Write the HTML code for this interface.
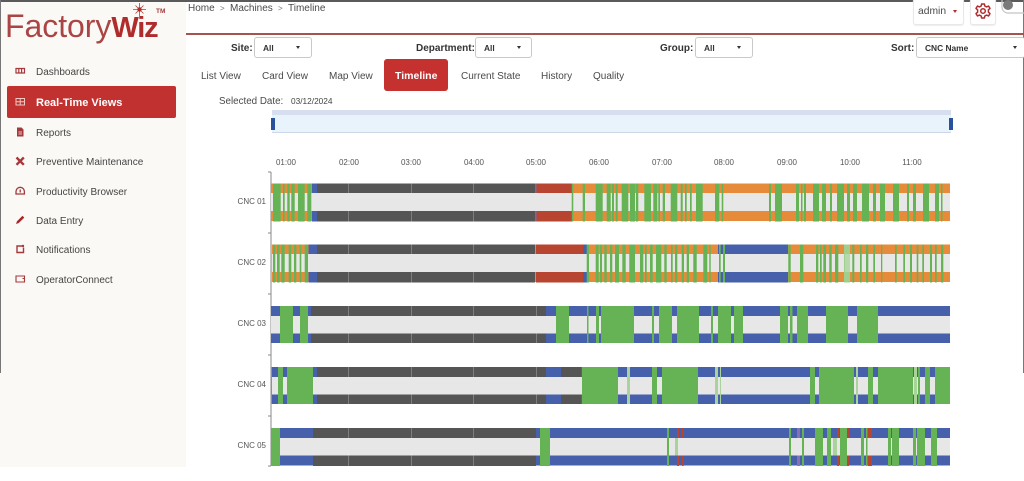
<!DOCTYPE html>
<html lang="en">
<head>
<meta charset="utf-8">
<title>FactoryWiz Timeline</title>
<style>
html,body{margin:0;padding:0;background:#fff}
body{width:1024px;height:481px;position:relative;overflow:hidden;font-family:"Liberation Sans",sans-serif;color:#444}
#wrap{position:absolute;left:0;top:0;width:1024px;height:481px;overflow:hidden;filter:blur(.3px)}
.a{position:absolute;white-space:nowrap}
#top{left:0;top:0;width:1024px;height:2px;background:#5a5a5a}
#lb{left:0;top:0;width:1px;height:373px;background:#777}
#rb{right:0;top:0;width:1px;height:373px;background:#777}
#side{left:0;top:0;width:186px;height:467px;background:#faf9f5}
#hline{left:186px;top:33px;width:838px;height:2px;background:#a5534c}
.logo{font-size:32px;line-height:36px;color:#ab4545;left:5px;top:8px;letter-spacing:-.05px}
.logo b{color:#b02c2c;font-size:29px;letter-spacing:-1.2px}
.tm{left:156px;top:8px;font-size:6.5px;font-weight:bold;color:#a5383a}
.nav{left:36px;font-size:10px;line-height:12px;color:#454545}
.active{left:7px;top:86px;width:169px;height:32px;background:#c1312f;border-radius:2px}
.ic{position:absolute;left:14px;width:12px;height:12px}
.t{font-size:10px;line-height:12px;color:#4a4a4a}
.lbl{font-size:10px;line-height:12px;font-weight:bold;color:#333}
.sel{height:19px;background:#fff;border:1px solid #c9c9c9;border-radius:3px;box-sizing:content-box}
.sel span{position:absolute;left:8px;top:5px;font-size:8.4px;line-height:10px;font-weight:bold;color:#333}
.sel i{position:absolute;top:8px;width:0;height:0;border-left:2.5px solid transparent;border-right:2.5px solid transparent;border-top:3px solid #333}
.hr{font-size:8px;line-height:10px;top:158px;color:#555;width:40px;text-align:center}
.cnc{font-size:8px;line-height:10px;left:225px;width:41px;text-align:right;color:#555}
</style>
</head>
<body>
<div id="wrap">
<div class="a" id="side"></div>
<div class="a" id="top"></div>
<div class="a" id="lb"></div>
<div class="a" id="rb"></div>
<div class="a" id="hline"></div>

<div class="a logo">Factory<b>Wiz</b></div>
<div class="a tm">TM</div>
<svg class="a" style="left:133px;top:3px" width="13" height="13" viewBox="0 0 13 13"><path d="M6.500 0V13M0 6.500H13M2.500 2.500L10.500 10.500M10.500 2.500L2.500 10.500" stroke="#b5403c" stroke-width=".8"/><circle cx="6.500" cy="6.500" r="2.200" fill="#b02c2c"/></svg>

<div class="a active"></div>
<svg class="ic" style="top:65px" viewBox="0 0 12 12"><path d="M2 3.500H10.500V8H2zM4.800 3.500V8M7.600 3.500V8" fill="none" stroke="#a5383a" stroke-width="1.200"/></svg>
<svg class="ic" style="top:96px" viewBox="0 0 12 12"><path d="M2 2.500H10.500V9H2zM2 5.700H10.500M6.200 2.500V9" fill="none" stroke="#f0c8c4" stroke-width="1"/></svg>
<svg class="ic" style="top:126px" viewBox="0 0 12 12"><path d="M3 1.500H7.500L9.500 3.500V10.500H3z" fill="#a5383a"/><path d="M4.500 6H8M4.500 8H8" stroke="#faf9f5" stroke-width=".8"/></svg>
<svg class="ic" style="top:155px" viewBox="0 0 12 12"><path d="M2.500 2.500L9.800 9.800M9.800 2.500L2.500 9.800" stroke="#a5383a" stroke-width="2.400"/></svg>
<svg class="ic" style="top:185px" viewBox="0 0 12 12"><path d="M2 9V6.500A4.200 4.200 0 0 1 10.400 6.500V9z" fill="none" stroke="#a5383a" stroke-width="1.300"/><path d="M6.200 4.500V7.500" stroke="#a5383a" stroke-width="1.300"/></svg>
<svg class="ic" style="top:214px" viewBox="0 0 12 12"><path d="M2 10L3 7.200L8.500 1.800L10.300 3.600L4.800 9z" fill="#a5282c"/></svg>
<svg class="ic" style="top:243px" viewBox="0 0 12 12"><path d="M8 3H3V9.500H9.500V4.500" fill="none" stroke="#a5383a" stroke-width="1.400"/><circle cx="9" cy="3" r="1.200" fill="#a5383a"/></svg>
<svg class="ic" style="top:273px" viewBox="0 0 12 12"><path d="M2 3H10.500V9H2zM8.500 5.500H10.500" fill="none" stroke="#a5383a" stroke-width="1.100"/></svg>

<div class="a nav" style="top:67px">Dashboards</div>
<div class="a nav" style="top:97px;color:#fff;font-weight:bold;font-size:11px">Real-Time Views</div>
<div class="a nav" style="top:128px">Reports</div>
<div class="a nav" style="top:157px">Preventive Maintenance</div>
<div class="a nav" style="top:187px">Productivity Browser</div>
<div class="a nav" style="top:216px">Data Entry</div>
<div class="a nav" style="top:245px">Notifications</div>
<div class="a nav" style="top:275px">OperatorConnect</div>

<div class="a t" style="left:188px;top:3px">Home</div>
<div class="a t" style="left:220px;top:3px;font-size:8px;color:#777">&gt;</div>
<div class="a t" style="left:230px;top:3px">Machines</div>
<div class="a t" style="left:278px;top:3px;font-size:8px;color:#777">&gt;</div>
<div class="a t" style="left:288px;top:3px">Timeline</div>

<div class="a" style="left:913px;top:-2px;width:49px;height:25px;border:1px solid #e8e8e8;border-radius:3px;background:#fff;box-shadow:0 1px 1px #eee"></div>
<div class="a t" style="left:918px;top:6px;font-size:10.300px">admin</div>
<div class="a" style="left:953px;top:10px;width:0;height:0;border-left:2.500px solid transparent;border-right:2.500px solid transparent;border-top:3px solid #b02c2c"></div>
<div class="a" style="left:970px;top:-2px;width:24px;height:25px;border:1px solid #e8e8e8;border-radius:3px;background:#fff;box-shadow:0 1px 1px #eee"></div>
<svg class="a" style="left:975px;top:3px" width="16" height="16" viewBox="0 0 16 16"><path d="M6.600 1H9.400L9.800 3L11.600 3.900L13.500 3L15 5.400L13.400 6.800V9.200L15 10.600L13.500 13L11.600 12.100L9.800 13L9.400 15H6.600L6.200 13L4.400 12.100L2.500 13L1 10.600L2.600 9.200V6.800L1 5.400L2.500 3L4.400 3.900L6.200 3z" fill="none" stroke="#b02c2c" stroke-width="1.500" stroke-linejoin="round"/><circle cx="8" cy="8" r="2.300" fill="none" stroke="#b02c2c" stroke-width="1.500"/></svg>
<svg class="a" style="left:1000px;top:0" width="24" height="15" viewBox="0 0 24 15"><path d="M24 13H8A6 6 0 0 1 2 7V0" fill="none" stroke="#c4c4c4" stroke-width="1.200"/><circle cx="8" cy="5" r="5" fill="#7a7a7a"/></svg>

<div class="a lbl" style="left:231px;top:43px">Site:</div>
<div class="a sel" style="left:254px;top:37px;width:56px"><span>All</span><i style="left:41px"></i></div>
<div class="a lbl" style="left:416px;top:43px">Department:</div>
<div class="a sel" style="left:475px;top:37px;width:55px"><span>All</span><i style="left:41px"></i></div>
<div class="a lbl" style="left:660px;top:43px">Group:</div>
<div class="a sel" style="left:695px;top:37px;width:56px"><span>All</span><i style="left:41px"></i></div>
<div class="a lbl" style="left:891px;top:43px">Sort:</div>
<div class="a sel" style="left:916px;top:37px;width:108px;border-right:0"><span>CNC Name</span><i style="left:96px"></i></div>

<div class="a t" style="left:201px;top:71px">List View</div>
<div class="a t" style="left:262px;top:71px">Card View</div>
<div class="a t" style="left:329px;top:71px">Map View</div>
<div class="a" style="left:384px;top:59px;width:64px;height:32px;background:#c4312f;border-radius:3px"></div>
<div class="a t" style="left:395px;top:70px;color:#fff;font-weight:bold;font-size:10.500px">Timeline</div>
<div class="a t" style="left:461px;top:71px">Current State</div>
<div class="a t" style="left:541px;top:71px">History</div>
<div class="a t" style="left:593px;top:71px">Quality</div>

<div class="a t" style="left:219px;top:96px;font-size:9.800px">Selected Date:</div>
<div class="a" style="left:291px;top:96px;font-size:8.300px;line-height:10px;color:#444">03/12/2024</div>

<div class="a" style="left:272px;top:110px;width:679px;height:5px;background:#d6deef"></div>
<div class="a" style="left:272px;top:115px;width:679px;height:17px;background:#e9f3fb;border-bottom:1px solid #ccd8e8"></div>
<div class="a" style="left:271px;top:118px;width:3.500px;height:12px;background:#2a529c"></div>
<div class="a" style="left:949px;top:118px;width:4px;height:12px;background:#2a529c"></div>

<div class="a hr" style="left:266px">01:00</div>
<div class="a hr" style="left:329px">02:00</div>
<div class="a hr" style="left:391px">03:00</div>
<div class="a hr" style="left:454px">04:00</div>
<div class="a hr" style="left:516px">05:00</div>
<div class="a hr" style="left:579px">06:00</div>
<div class="a hr" style="left:642px">07:00</div>
<div class="a hr" style="left:704px">08:00</div>
<div class="a hr" style="left:767px">09:00</div>
<div class="a hr" style="left:830px">10:00</div>
<div class="a hr" style="left:892px">11:00</div>

<div class="a cnc" style="top:197px">CNC 01</div>
<div class="a cnc" style="top:258px">CNC 02</div>
<div class="a cnc" style="top:319px">CNC 03</div>
<div class="a cnc" style="top:380px">CNC 04</div>
<div class="a cnc" style="top:441px">CNC 05</div>

<svg class="a" style="left:0;top:0" width="1024" height="481" viewBox="0 0 1024 481">
<path d="M271 172V466M268 172H271M268 233H271M268 294H271M268 355H271M268 416H271M268 466H271" stroke="#8a8a8a" stroke-width="1" fill="none"/>

<!-- Row 1 -->
<g transform="translate(0,183.500)">
<rect x="271" y="0" width="679" height="37.500" fill="#e58b3a"/>
<path d="M312 0H317V38H312z" fill="#4660ac"/>
<path d="M317 0H535V38H317z" fill="#555"/>
<path d="M535 0H536.500V38H535z" fill="#8066a0"/>
<path d="M536.500 0H571V38H536.500z" fill="#b8452f"/>
<path d="M571 0H572V38H571z" fill="#4660ac"/>
<path d="M348 0h.8v38h-.8zM411 0h.8v38h-.8zM473 0h.8v38h-.8z" fill="#888"/>
<rect x="271" y="9.500" width="679" height="18" fill="#e6e7e6"/>
<path fill="#66b355" d="M273 0H280.700V38H273zM283 0H284.700V38H283zM287.300 0H289.700V38H287.300zM291.300 0H294.700V38H291.300zM298 0H304.700V38H298zM307.300 0H311.300V38H307.300zM571.700 0H573.300V38H571.700zM582.700 0H585V38H582.700zM595.700 0H602.700V38H595.700zM606.700 0H610.700V38H606.700zM612 0H614V38H612zM615.700 0H617.700V38H615.700zM621.700 0H628.300V38H621.700zM630 0H635V38H630zM636 0H638.300V38H636zM644.300 0H651V38H644.300zM653.300 0H657.300V38H653.300zM658.300 0H660V38H658.300zM662.700 0H665V38H662.700zM670.700 0H677.300V38H670.700zM680.700 0H682.700V38H680.700zM685 0H686.700V38H685zM690 0H691.700V38H690zM696 0H702.700V38H696zM715 0H719.300V38H715zM721.700 0H723.300V38H721.700zM769 0H771V38H769zM775 0H782V38H775zM796 0H799V38H796zM801 0H802.500V38H801zM804 0H806V38H804zM813 0H819V38H813zM822 0H826V38H822zM830 0H832V38H830zM837 0H844V38H837zM847 0H850V38H847zM853 0H857V38H853zM862 0H869V38H862zM873 0H876V38H873zM880 0H885V38H880zM893 0H899V38H893zM907 0H909V38H907zM913 0H916V38H913zM923 0H929V38H923zM935 0H939V38H935zM941 0H942.500V38H941z"/>
</g>

<!-- Row 2 -->
<g transform="translate(0,244.500)">
<rect x="271" y="0" width="679" height="37.500" fill="#e58b3a"/>
<path d="M308.500 0H317V38H308.500z" fill="#4660ac"/>
<path d="M317 0H535V38H317z" fill="#555"/>
<path d="M536 0H583V38H536z" fill="#b8452f"/>
<path d="M583 0H587V38H583zM718 0H725V38H718zM725 0H788V38H725z" fill="#4660ac"/>
<path d="M348 0h.8v38h-.8zM411 0h.8v38h-.8zM473 0h.8v38h-.8z" fill="#888"/>
<rect x="271" y="9.500" width="679" height="18" fill="#e6e7e6"/>
<path fill="#9fcf8f" d="M271 0H272V38H271zM844 0H850V38H844z"/>
<path fill="#66b355" d="M273 0H275.300V38H273zM277 0H279.700V38H277zM281.300 0H284.700V38H281.300zM288.700 0H291.300V38H288.700zM294 0H296.300V38H294zM299.700 0H301.300V38H299.700zM304.700 0H308V38H304.700zM586.700 0H589V38H586.700zM595.700 0H598.700V38H595.700zM600 0H602V38H600zM604.300 0H606.700V38H604.300zM610 0H612.300V38H610zM615 0H619V38H615zM622.300 0H625.700V38H622.300zM629.300 0H635V38H629.300zM640 0H643.300V38H640zM645 0H646.700V38H645zM650 0H652.700V38H650zM656 0H661.300V38H656zM664.300 0H666.700V38H664.300zM671 0H672.700V38H671zM675 0H677.300V38H675zM681.700 0H684V38H681.700zM686.700 0H689V38H686.700zM693.300 0H696.700V38H693.300zM703.300 0H707.300V38H703.300zM709.300 0H710.700V38H709.300zM719 0H720.700V38H719zM723 0H725V38H723zM788.300 0H790.700V38H788.300zM800 0H803.300V38H800zM816 0H818.300V38H816zM820 0H821.700V38H820zM823.300 0H826V38H823.300zM829.300 0H831.700V38H829.300zM835 0H838.300V38H835zM852.300 0H854.300V38H852.300zM860 0H861.700V38H860zM866 0H868.300V38H866zM873.300 0H875V38H873.300zM881 0H882.300V38H881zM895 0H896.700V38H895zM903.300 0H905V38H903.300zM910 0H912V38H910zM916.700 0H918.300V38H916.700zM922.300 0H924V38H922.300zM930 0H932V38H930zM935 0H936.700V38H935zM941 0H943.300V38H941z"/>
<path fill="#b5d9a8" d="M845 9.500H850V27.500H845z"/>
</g>

<!-- Row 3 -->
<g transform="translate(0,306)">
<rect x="271" y="0" width="679" height="37" fill="#4660ac"/>
<path d="M311 0H546V37H311z" fill="#555"/>
<path d="M348 0h.8v37h-.8zM411 0h.8v37h-.8zM473 0h.8v37h-.8zM536 0h.8v37h-.8z" fill="#888"/>
<rect x="271" y="10" width="679" height="17.500" fill="#e6e7e6"/>
<path fill="#66b355" d="M280 0H293V37H280zM300 0H308V37H300zM556 0H569V37H556zM587 0H588.500V37H587zM596 0H599V37H596zM601 0H634V37H601zM652 0H654V37H652zM659 0H672V37H659zM677 0H699V37H677zM711 0H713V37H711zM718 0H731V37H718zM734 0H743V37H734zM780 0H788V37H780zM790 0H792.500V37H790zM797 0H808V37H797zM826 0H848V37H826zM857 0H878V37H857z"/>
</g>

<!-- Row 4 -->
<g transform="translate(0,367)">
<rect x="271" y="0" width="679" height="37" fill="#4660ac"/>
<path d="M317 0H546V37H317zM561 0H581V37H561z" fill="#555"/>
<path d="M348 0h.8v37h-.8zM411 0h.8v37h-.8zM473 0h.8v37h-.8zM536 0h.8v37h-.8z" fill="#888"/>
<rect x="271" y="10" width="679" height="17.500" fill="#e6e7e6"/>
<path fill="#66b355" d="M271 0H272V37H271zM278 0H283V37H278zM287 0H313V37H287zM582 0H618V37H582zM652 0H657V37H652zM662 0H698V37H662zM810 0H815V37H810zM819 0H854V37H819zM868 0H873V37H868zM878 0H913V37H878zM918 0H920V37H918zM925 0H930V37H925zM935 0H950V37H935z"/>
<path fill="#a9d39b" d="M627 0H630V37H627zM715 0H718V37H715zM720 0H721V37H720zM856 0H858V37H856zM914 0H917V37H914z"/>
</g>

<!-- Row 5 -->
<g transform="translate(0,428)">
<rect x="271" y="0" width="679" height="37.500" fill="#4660ac"/>
<path d="M313 0H536V38H313z" fill="#555"/>
<path d="M348 0h.8v38h-.8zM411 0h.8v38h-.8zM473 0h.8v38h-.8z" fill="#888"/>
<path d="M797 0H800V38H797z" fill="#8a70b0"/>
<path fill="#b8452f" d="M677 0H679V38H677zM682 0H683.500V38H682zM837 0H839V38H837zM847 0H849V38H847zM868 0H872V38H868z"/>
<rect x="271" y="10" width="679" height="17.500" fill="#e6e7e6"/>
<path fill="#66b355" d="M271 0H280V38H271zM540 0H550V38H540zM667 0H669V38H667zM789 0H791V38H789zM802 0H804V38H802zM815 0H823V38H815zM827 0H831V38H827zM840 0H847V38H840zM861 0H864V38H861zM866 0H867.500V38H866zM888 0H891V38H888zM892 0H899V38H892zM913 0H916V38H913zM917 0H925V38H917zM931 0H937V38H931z"/>
<path fill="#a9d39b" d="M833 10H837V27.500H833zM675 10H678V27.500H675z"/>
</g>
</svg>
</div>
</body>
</html>
